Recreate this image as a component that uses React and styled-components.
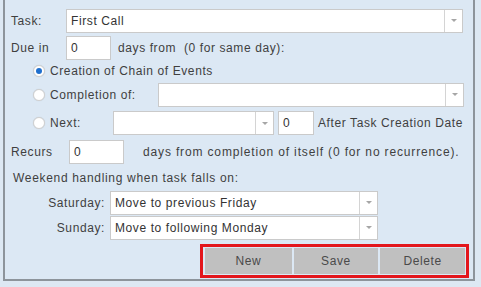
import React from 'react'
import styled, { createGlobalStyle } from 'styled-components'

const Global = createGlobalStyle`
  html, body {
    margin: 0;
    padding: 0;
    background: #dde8f3;
    font-family: "Liberation Sans", Arial, sans-serif;
    font-size: 12px;
    letter-spacing: 0.6px;
    color: #3f3f3f;
  }
`

const Panel = styled.div`
  margin-left: 3px;
  width: 472px;
  height: 281px;
  border: 2px solid #8d949b;
  border-top: none;
  background: #dce8f4;
  display: flex;
  flex-direction: column;
  padding-top: 8px;
  box-sizing: border-box;
`

const Row = styled.div`
  display: flex;
  align-items: center;
  height: ${p => p.$h}px;
  margin-top: ${p => p.$mt || 0}px;
  padding-left: ${p => p.$pl || 0}px;
  white-space: nowrap;
`

const Label = styled.span`
  width: ${p => p.$w}px;
  flex: none;
  text-align: ${p => p.$right ? 'right' : 'left'};
  padding-right: ${p => p.$right ? 5 : 0}px;
  box-sizing: border-box;
`

const Text = styled.span`
  margin-left: ${p => p.$ml || 0}px;
  letter-spacing: ${p => p.$ls || 0.6}px;
`

const Box = styled.div`
  display: flex;
  align-items: stretch;
  width: ${p => p.$w}px;
  height: ${p => p.$h || 24}px;
  margin-left: ${p => p.$ml || 0}px;
  background: #fff;
  border: 1px solid #cacaca;
  box-sizing: border-box;
  flex: none;
`

const Value = styled.div`
  flex: 1;
  display: flex;
  align-items: center;
  padding-left: 4px;
  color: #333;
`

const Arrow = styled.div`
  width: 17px;
  border-left: 1px solid #d4d4d4;
  display: flex;
  align-items: center;
  justify-content: center;
  &::after {
    content: '';
    border-left: 3px solid transparent;
    border-right: 3px solid transparent;
    border-top: 3px solid #a6a6a6;
  }
`

const Radio = styled.span`
  width: 12px;
  height: 12px;
  border-radius: 50%;
  background: #fff;
  border: 1px solid #d0d0d0;
  box-sizing: border-box;
  box-shadow: 0 0 1px rgba(0,0,0,0.15);
  display: flex;
  align-items: center;
  justify-content: center;
  flex: none;
  margin-right: 5px;
  &::after {
    content: '';
    width: 6px;
    height: 6px;
    border-radius: 50%;
    background: ${p => p.$on ? '#1f6fce' : 'transparent'};
  }
`

const RadioLabel = styled.span`
  width: ${p => p.$w ? p.$w + 'px' : 'auto'};
  flex: none;
`

const ButtonFrame = styled.div`
  margin-left: 195px;
  width: 269px;
  height: 34px;
  border: 3px solid #e3161c;
  box-sizing: border-box;
  display: flex;
  gap: 2px;
  padding: 1px 1px 1px 2px;
`

const Button = styled.div`
  flex: ${p => p.$w} 0 0;
  background: #c0c0c0;
  display: flex;
  align-items: center;
  justify-content: center;
  color: #4a4a4a;
`

function Combo({ w, value, ml }) {
  return (
    <Box $w={w} $ml={ml}>
      <Value>{value}</Value>
      <Arrow />
    </Box>
  )
}

function Field({ w, value, ml }) {
  return (
    <Box $w={w} $ml={ml}>
      <Value>{value}</Value>
    </Box>
  )
}

export default function App() {
  return (
    <>
      <Global />
      <Panel>
        <Row $h={25} $pl={6}>
          <Label $w={55}>Task:</Label>
          <Combo w={397} value="First Call" />
        </Row>
        <Row $h={24} $mt={3} $pl={6}>
          <Label $w={55}>Due in</Label>
          <Field w={45} value="0" />
          <Text $ml={7}>days from&nbsp; (0 for same day):</Text>
        </Row>
        <Row $h={18} $mt={2} $pl={28}>
          <Radio $on />
          <RadioLabel>Creation of Chain of Events</RadioLabel>
        </Row>
        <Row $h={25} $mt={2} $pl={28}>
          <Radio />
          <RadioLabel $w={108}>Completion of:</RadioLabel>
          <Combo w={306} />
        </Row>
        <Row $h={24} $mt={4} $pl={28}>
          <Radio />
          <RadioLabel $w={63}>Next:</RadioLabel>
          <Combo w={161} />
          <Field w={36} value="0" ml={4} />
          <Text $ml={4}>After Task Creation Date</Text>
        </Row>
        <Row $h={24} $mt={5} $pl={6}>
          <Label $w={58}>Recurs</Label>
          <Field w={55} value="0" />
          <Text $ml={19} $ls={0.85}>days from completion of itself (0 for no recurrence).</Text>
        </Row>
        <Row $h={16} $mt={6} $pl={8}>
          <Text $ls={0.68}>Weekend handling when task falls on:</Text>
        </Row>
        <Row $h={25} $mt={4} $pl={0}>
          <Label $w={105} $right>Saturday:</Label>
          <Combo w={268} value="Move to previous Friday" />
        </Row>
        <Row $h={25} $mt={0} $pl={0}>
          <Label $w={105} $right>Sunday:</Label>
          <Combo w={268} value="Move to following Monday" />
        </Row>
        <Row $h={34} $mt={4}>
          <ButtonFrame>
            <Button $w={86}>New</Button>
            <Button $w={84}>Save</Button>
            <Button $w={84}>Delete</Button>
          </ButtonFrame>
        </Row>
      </Panel>
    </>
  )
}
